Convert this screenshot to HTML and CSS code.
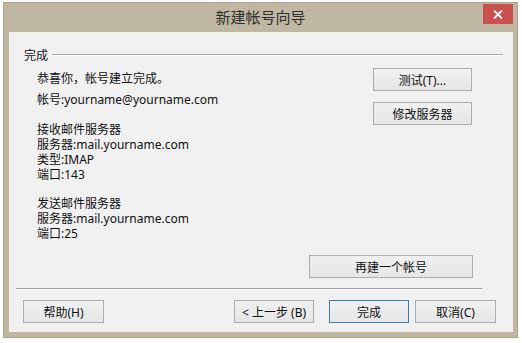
FILE: index.html
```html
<!DOCTYPE html>
<html lang="zh-CN">
<head>
    <meta charset="UTF-8">
    <title>新建帐号向导</title>
    <link rel="stylesheet" href="styles.css">
</head>
<body>
    <div class="window">
        <div class="titlebar">
            <span></span>
            <span class="title">新建帐号向导</span>
            <span class="close">
                <svg width="10" height="9" viewBox="0 0 10 9"><path d="M1 0.5 L9 8.5 M9 0.5 L1 8.5" stroke="#fff" stroke-width="1.8"/></svg>
            </span>
        </div>

        <div class="client">
            <!-- Riquadro del gruppo -->
            <div class="group-head">
                <span>完成</span>
                <span class="group-line"></span>
            </div>

            <div class="content">
                <div class="info">
                    <div class="line greet">恭喜你，帐号建立完成。</div>
                    <div class="line account">帐号:yourname@yourname.com</div>
                    <div class="block">
                        <div class="line">接收邮件服务器</div>
                        <div class="line">服务器:mail.yourname.com</div>
                        <div class="line">类型:IMAP</div>
                        <div class="line">端口:143</div>
                    </div>
                    <div class="block second">
                        <div class="line">发送邮件服务器</div>
                        <div class="line">服务器:mail.yourname.com</div>
                        <div class="line">端口:25</div>
                    </div>
                </div>
                <div class="side">
                    <button class="btn side-btn">测试(T)...</button>
                    <button class="btn side-btn">修改服务器</button>
                </div>
            </div>

            <div class="again-row">
                <button class="btn again">再建一个帐号</button>
            </div>

            <div class="separator"></div>

            <div class="footer">
                <button class="btn help">帮助(H)</button>
                <div class="nav">
                    <button class="btn">&lt; 上一步 (B)</button>
                    <button class="btn primary">完成</button>
                    <button class="btn cancel">取消(C)</button>
                </div>
            </div>
        </div>
    </div>
</body>
</html>
```

FILE: styles.css
```css
body {
    margin: 0;
    background: #ffffff;
    font-family: 'Noto Sans', 'Noto Sans CJK SC', sans-serif;
    font-size: 12px;
    color: #111;
}

.window {
    margin: 2px 0 0 3px;
    width: 515px;
    height: 336px;
    box-sizing: border-box;
    background: #bfb7a1;
    border: 1px solid #aaa28c;
    display: flex;
    flex-direction: column;
}

.titlebar {
    height: 29px;
    display: grid;
    grid-template-columns: 1fr auto 1fr;
    align-items: start;
}

.title {
    font-size: 15px;
    color: #2f2f2f;
    line-height: 29px;
}

.close {
    justify-self: end;
    width: 30px;
    height: 20px;
    margin: 1px 4px 0 0;
    background: #c8504f;
    display: flex;
    justify-content: center;
    align-items: center;
}

.client {
    margin: 0 4px 0 5px;
    height: 300px;
    background: #f0f0f0;
    display: flex;
    flex-direction: column;
}

.group-head {
    display: flex;
    align-items: center;
    height: 16px;
    margin: 15px 10px 0 15px;
    gap: 4px;
}

.group-line {
    flex: 1;
    border-top: 1px solid #a9a9a9;
    border-bottom: 1px solid #ffffff;
}

.content {
    display: flex;
    justify-content: space-between;
    align-items: flex-start;
}

.info {
    margin-left: 28px;
    margin-top: 8px;
}

.line {
    height: 15px;
    line-height: 15px;
}

.account {
    margin-top: 6px;
}

.block {
    margin-top: 15px;
}

.block.second {
    margin-top: 14px;
}

.side {
    margin: 5px 41px 0 0;
    display: flex;
    flex-direction: column;
    gap: 11px;
}

.btn {
    height: 23px;
    width: 80px;
    padding: 0;
    font-family: inherit;
    font-size: 12px;
    color: #111;
    background: linear-gradient(#f0f0f0, #e5e5e5);
    border: 1px solid #acacac;
    border-radius: 0;
}

.side-btn {
    width: 99px;
}

.again-row {
    display: flex;
    justify-content: flex-end;
    margin: auto 40px 0 0;
}

.again {
    width: 164px;
}

.separator {
    margin: 10px 31px 0 7px;
    border-top: 1px solid #a0a0a0;
    border-bottom: 1px solid #ffffff;
}

.footer {
    display: flex;
    justify-content: space-between;
    margin: 10px 17px 9px 14px;
}

.help {
    width: 81px;
}

.nav {
    display: flex;
}

.primary {
    margin-left: 15px;
    border-color: #3c7fb1;
}

.cancel {
    width: 81px;
    margin-left: 6px;
}
```
